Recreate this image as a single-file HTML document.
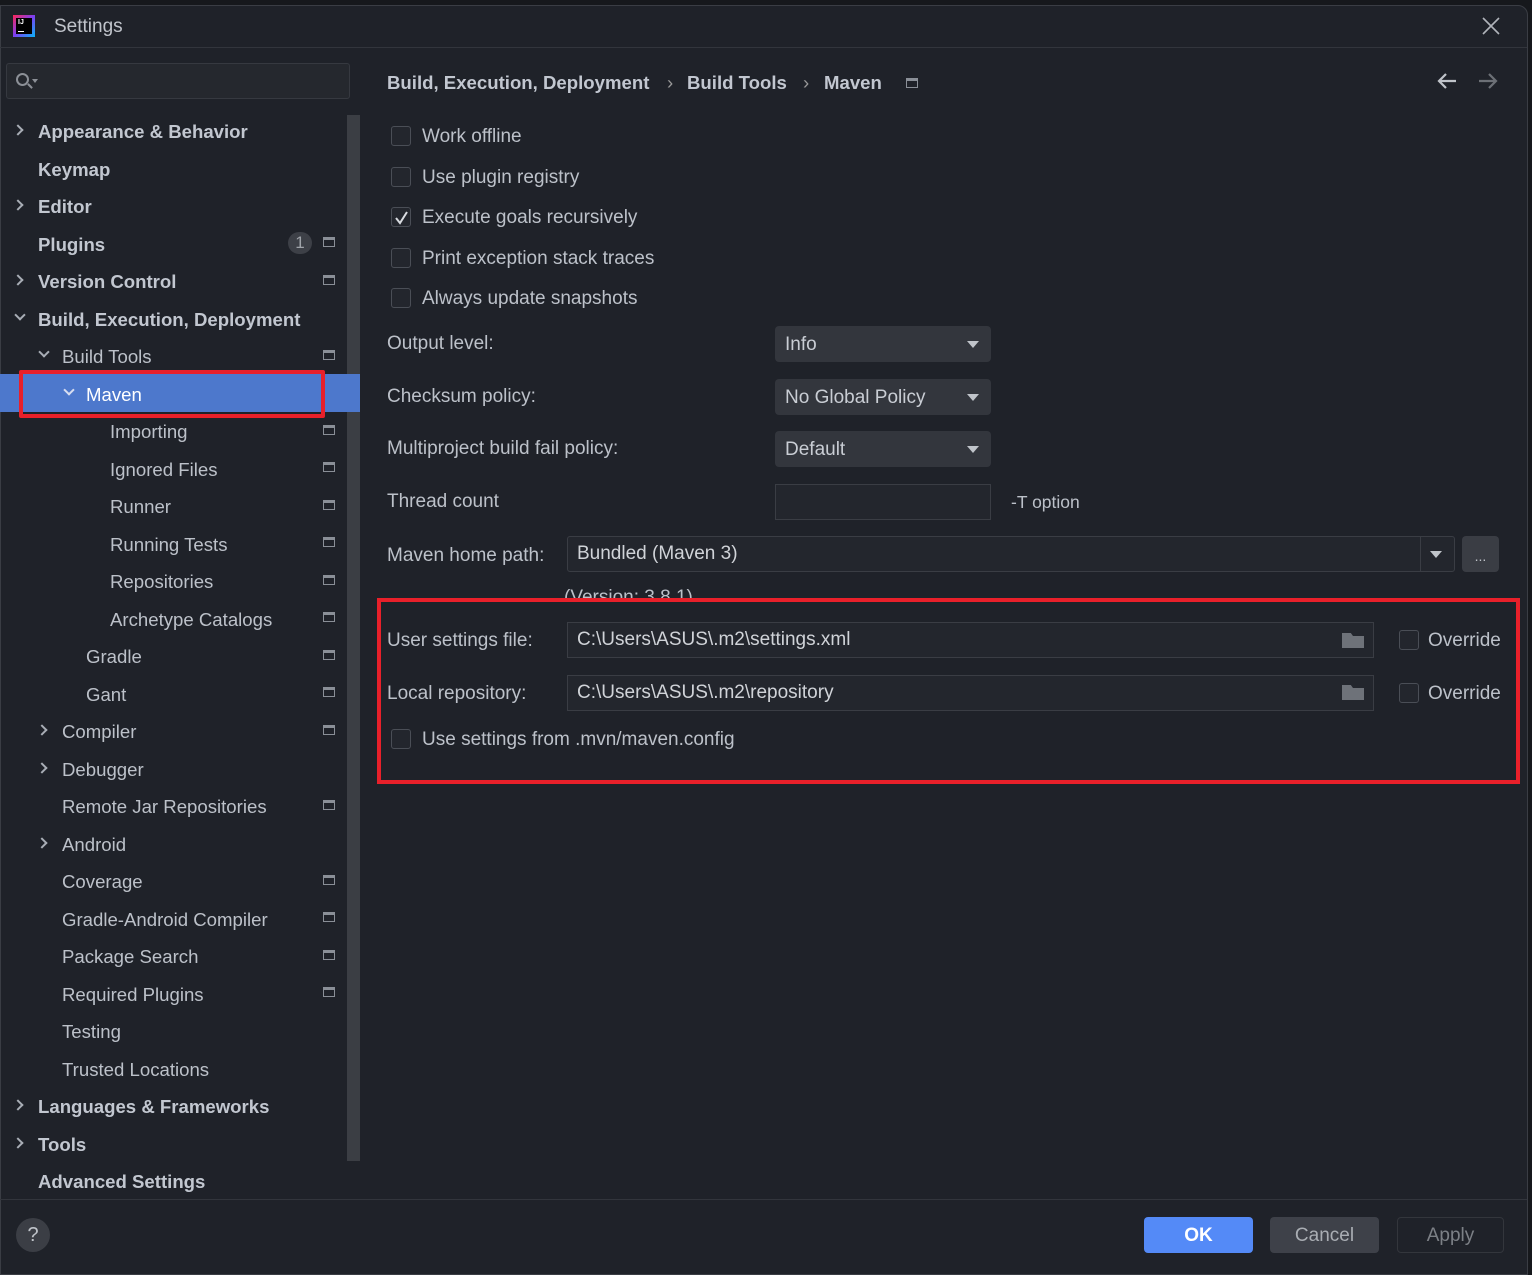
<!DOCTYPE html>
<html><head><meta charset="utf-8"><style>
*{box-sizing:border-box;margin:0;padding:0}
body{width:1532px;height:1264px;background:#16181c;font-family:"Liberation Sans","Noto Sans CJK SC",sans-serif;color:#bcc1c9;position:relative;overflow:hidden;font-size:18.6px}
.win{position:absolute;left:0;top:5px;width:1528px;height:1270px;background:#1f2229;border:1px solid #3a3d44;border-radius:0 10px 0 0}
.a{position:absolute;white-space:nowrap}
.row{position:absolute;height:37px;line-height:39px;white-space:nowrap}
.b{font-weight:bold;color:#c2c7d0;font-size:18.6px}
.chev{position:absolute;width:8px;height:8px;border-right:2px solid #a8adb5;border-bottom:2px solid #a8adb5}
.r{transform:rotate(-45deg)}
.d{transform:rotate(45deg)}
.ic{position:absolute;left:323px;width:12px;height:10px;border:1.5px solid #8a8f97;border-top-width:3px}
.cb{position:absolute;width:20px;height:20px;border:1.5px solid #4a4e56;border-radius:3px;background:#23262d}
.combo{position:absolute;background:#33363d;border-radius:4px;height:36px;line-height:38px;padding-left:10px;color:#c9cdd4}
.combo:after{content:"";position:absolute;right:12px;top:15px;border-left:6px solid transparent;border-right:6px solid transparent;border-top:7px solid #c0c4ca}
.field{position:absolute;border:1px solid #3a3d44;background:#23262d;height:36px;line-height:34px;padding-left:9px;color:#d0d3d8}
.fold{position:absolute;width:22px;height:15px;background:#6e7279;clip-path:polygon(0 0,40% 0,50% 20%,100% 20%,100% 100%,0 100%)}
.rt{font-size:19px}
</style></head><body>
<div class="win"></div>
<!-- title -->
<div class="a" style="left:13px;top:15px;width:22px;height:22px;background:linear-gradient(135deg,#fe2857,#7b3ff2 50%,#06b6f5);"></div>
<div class="a" style="left:16px;top:18px;width:16px;height:16px;background:#000;color:#fff;font-size:7px;font-weight:bold;line-height:9px;padding-left:2px">IJ</div>
<div class="a" style="left:18px;top:31px;width:6px;height:1px;background:#fff"></div>
<div class="a" style="left:54px;top:16px;font-size:19px;color:#c0c4cb">Settings</div>
<svg class="a" style="left:1482px;top:17px" width="18" height="18"><path d="M1 1L17 17M17 1L1 17" stroke="#b0b4ba" stroke-width="1.6"/></svg>
<div class="a" style="left:0;top:47px;width:1527px;height:1px;background:#32353c"></div>
<!-- search -->
<div class="a" style="left:6px;top:63px;width:344px;height:36px;border:1px solid #363940;border-radius:3px;background:#25282e"></div>
<div class="a" style="left:16px;top:73px;width:13px;height:13px;border:2px solid #8c9097;border-radius:50%"></div>
<div class="a" style="left:27px;top:85px;width:6px;height:2px;background:#8c9097;transform:rotate(45deg)"></div>
<div class="a" style="left:32px;top:79px;border-left:3px solid transparent;border-right:3px solid transparent;border-top:4px solid #8c9097"></div>
<!-- scrollbar -->
<div class="a" style="left:347px;top:115px;width:13px;height:1046px;background:#3b3e44"></div>
<!-- selection -->
<div class="a" style="left:0;top:374px;width:360px;height:38px;background:#4d78cc"></div>
<div class="a" style="left:19px;top:370px;width:306px;height:48px;border:4px solid #e8202a;border-radius:2px"></div>
<!-- tree -->
<div class="chev r" style="left:14px;top:126px"></div><div class="row b" style="left:38px;top:112px">Appearance &amp; Behavior</div>
<div class="row b" style="left:38px;top:150px">Keymap</div>
<div class="chev r" style="left:14px;top:201px"></div><div class="row b" style="left:38px;top:187px">Editor</div>
<div class="row b" style="left:38px;top:225px">Plugins</div>
<div class="a" style="left:288px;top:232px;width:24px;height:22px;border-radius:11px;background:#3d4047;text-align:center;line-height:22px;font-size:17px;color:#a0a4aa">1</div><div class="ic" style="top:237px"></div>
<div class="chev r" style="left:14px;top:276px"></div><div class="row b" style="left:38px;top:262px">Version Control</div><div class="ic" style="top:275px"></div>
<div class="chev d" style="left:16px;top:311px"></div><div class="row b" style="left:38px;top:300px">Build, Execution, Deployment</div>
<div class="chev d" style="left:40px;top:348px"></div><div class="row" style="left:62px;top:337px">Build Tools</div><div class="ic" style="top:350px"></div>
<div class="chev d" style="left:65px;top:386px;border-color:#d8def0"></div><div class="row" style="left:86px;top:375px;color:#fff">Maven</div>
<div class="row" style="left:110px;top:412px">Importing</div><div class="ic" style="top:425px"></div>
<div class="row" style="left:110px;top:450px">Ignored Files</div><div class="ic" style="top:462px"></div>
<div class="row" style="left:110px;top:487px">Runner</div><div class="ic" style="top:500px"></div>
<div class="row" style="left:110px;top:525px">Running Tests</div><div class="ic" style="top:537px"></div>
<div class="row" style="left:110px;top:562px">Repositories</div><div class="ic" style="top:575px"></div>
<div class="row" style="left:110px;top:600px">Archetype Catalogs</div><div class="ic" style="top:612px"></div>
<div class="row" style="left:86px;top:637px">Gradle</div><div class="ic" style="top:650px"></div>
<div class="row" style="left:86px;top:675px">Gant</div><div class="ic" style="top:687px"></div>
<div class="chev r" style="left:38px;top:726px"></div><div class="row" style="left:62px;top:712px">Compiler</div><div class="ic" style="top:725px"></div>
<div class="chev r" style="left:38px;top:764px"></div><div class="row" style="left:62px;top:750px">Debugger</div>
<div class="row" style="left:62px;top:787px">Remote Jar Repositories</div><div class="ic" style="top:800px"></div>
<div class="chev r" style="left:38px;top:839px"></div><div class="row" style="left:62px;top:825px">Android</div>
<div class="row" style="left:62px;top:862px">Coverage</div><div class="ic" style="top:875px"></div>
<div class="row" style="left:62px;top:900px">Gradle-Android Compiler</div><div class="ic" style="top:912px"></div>
<div class="row" style="left:62px;top:937px">Package Search</div><div class="ic" style="top:950px"></div>
<div class="row" style="left:62px;top:975px">Required Plugins</div><div class="ic" style="top:987px"></div>
<div class="row" style="left:62px;top:1012px">Testing</div>
<div class="row" style="left:62px;top:1050px">Trusted Locations</div>
<div class="chev r" style="left:14px;top:1101px"></div><div class="row b" style="left:38px;top:1087px">Languages &amp; Frameworks</div>
<div class="chev r" style="left:14px;top:1139px"></div><div class="row b" style="left:38px;top:1125px">Tools</div>
<div class="row b" style="left:38px;top:1162px">Advanced Settings</div>
<!-- right -->
<div class="a b" style="left:387px;top:72px">Build, Execution, Deployment</div>
<div class="a" style="left:667px;top:72px;color:#999">›</div>
<div class="a b" style="left:687px;top:72px">Build Tools</div>
<div class="a" style="left:803px;top:72px;color:#999">›</div>
<div class="a b" style="left:824px;top:72px">Maven</div>
<div class="ic" style="left:906px;top:78px"></div>
<svg class="a" style="left:1436px;top:72px" width="22" height="18"><path d="M20 9H3M10 2L3 9L10 16" stroke="#c0c4ca" stroke-width="2.2" fill="none"/></svg>
<svg class="a" style="left:1477px;top:72px" width="22" height="18"><path d="M2 9H19M12 2L19 9L12 16" stroke="#6c7076" stroke-width="2.2" fill="none"/></svg>
<div class="cb" style="left:391px;top:126px"></div><div class="a rt" style="left:422px;top:126px">Work offline</div>
<div class="cb" style="left:391px;top:167px"></div><div class="a rt" style="left:422px;top:167px">Use plugin registry</div>
<div class="cb" style="left:391px;top:207px"></div><svg class="a" style="left:394px;top:210px" width="16" height="16"><path d="M2 8L6 13L13 2" stroke="#d8dbe0" stroke-width="2" fill="none"/></svg><div class="a rt" style="left:422px;top:207px">Execute goals recursively</div>
<div class="cb" style="left:391px;top:248px"></div><div class="a rt" style="left:422px;top:248px">Print exception stack traces</div>
<div class="cb" style="left:391px;top:288px"></div><div class="a rt" style="left:422px;top:288px">Always update snapshots</div>
<div class="a rt" style="left:387px;top:333px">Output level:</div><div class="combo rt" style="left:775px;top:326px;width:216px">Info</div>
<div class="a rt" style="left:387px;top:386px">Checksum policy:</div><div class="combo rt" style="left:775px;top:379px;width:216px">No Global Policy</div>
<div class="a rt" style="left:387px;top:438px">Multiproject build fail policy:</div><div class="combo rt" style="left:775px;top:431px;width:216px">Default</div>
<div class="a rt" style="left:387px;top:491px">Thread count</div><div class="field" style="left:775px;top:484px;width:216px"></div><div class="a" style="left:1011px;top:492px;font-size:17.5px">-T option</div>
<div class="a rt" style="left:387px;top:545px">Maven home path:</div>
<div class="field rt" style="left:567px;top:536px;width:888px;border-radius:3px">Bundled (Maven 3)</div>
<div class="a" style="left:1420px;top:537px;width:1px;height:34px;background:#3a3d44"></div>
<div class="a" style="left:1430px;top:551px;border-left:6px solid transparent;border-right:6px solid transparent;border-top:7px solid #c0c4ca"></div>
<div class="a" style="left:1462px;top:536px;width:37px;height:36px;background:#3a3d44;border-radius:4px;text-align:center;color:#c0c4ca;line-height:40px;font-size:14px">...</div>
<div class="a rt" style="left:564px;top:587px">(Version: 3.8.1)</div>
<div class="a" style="left:377px;top:598px;width:1143px;height:186px;border:4px solid #e8202a;background:#1f2229"></div>
<div class="a rt" style="left:387px;top:630px">User settings file:</div>
<div class="field rt" style="left:567px;top:622px;width:807px">C:\Users\ASUS\.m2\settings.xml</div><div class="fold" style="left:1342px;top:633px"></div>
<div class="cb" style="left:1399px;top:630px"></div><div class="a rt" style="left:1428px;top:630px">Override</div>
<div class="a rt" style="left:387px;top:683px">Local repository:</div>
<div class="field rt" style="left:567px;top:675px;width:807px">C:\Users\ASUS\.m2\repository</div><div class="fold" style="left:1342px;top:685px"></div>
<div class="cb" style="left:1399px;top:683px"></div><div class="a rt" style="left:1428px;top:683px">Override</div>
<div class="cb" style="left:391px;top:729px"></div><div class="a rt" style="left:422px;top:729px">Use settings from .mvn/maven.config</div>
<!-- footer -->
<div class="a" style="left:0;top:1199px;width:1527px;height:1px;background:#32353c"></div>
<div class="a" style="left:16px;top:1218px;width:34px;height:34px;border-radius:50%;background:#3b3e45;text-align:center;line-height:34px;color:#c0c4ca;font-size:20px">?</div>
<div class="a" style="left:1144px;top:1217px;width:109px;height:36px;border-radius:4px;background:#548af7;color:#fff;font-weight:bold;text-align:center;line-height:38px;font-size:19px">OK</div>
<div class="a" style="left:1270px;top:1217px;width:109px;height:36px;border-radius:4px;background:#3e4149;color:#a9adb3;text-align:center;line-height:38px;font-size:19px">Cancel</div>
<div class="a" style="left:1397px;top:1217px;width:107px;height:36px;border-radius:4px;border:1px solid #33363c;color:#7c8086;text-align:center;line-height:36px;font-size:19px">Apply</div>
</body></html>
